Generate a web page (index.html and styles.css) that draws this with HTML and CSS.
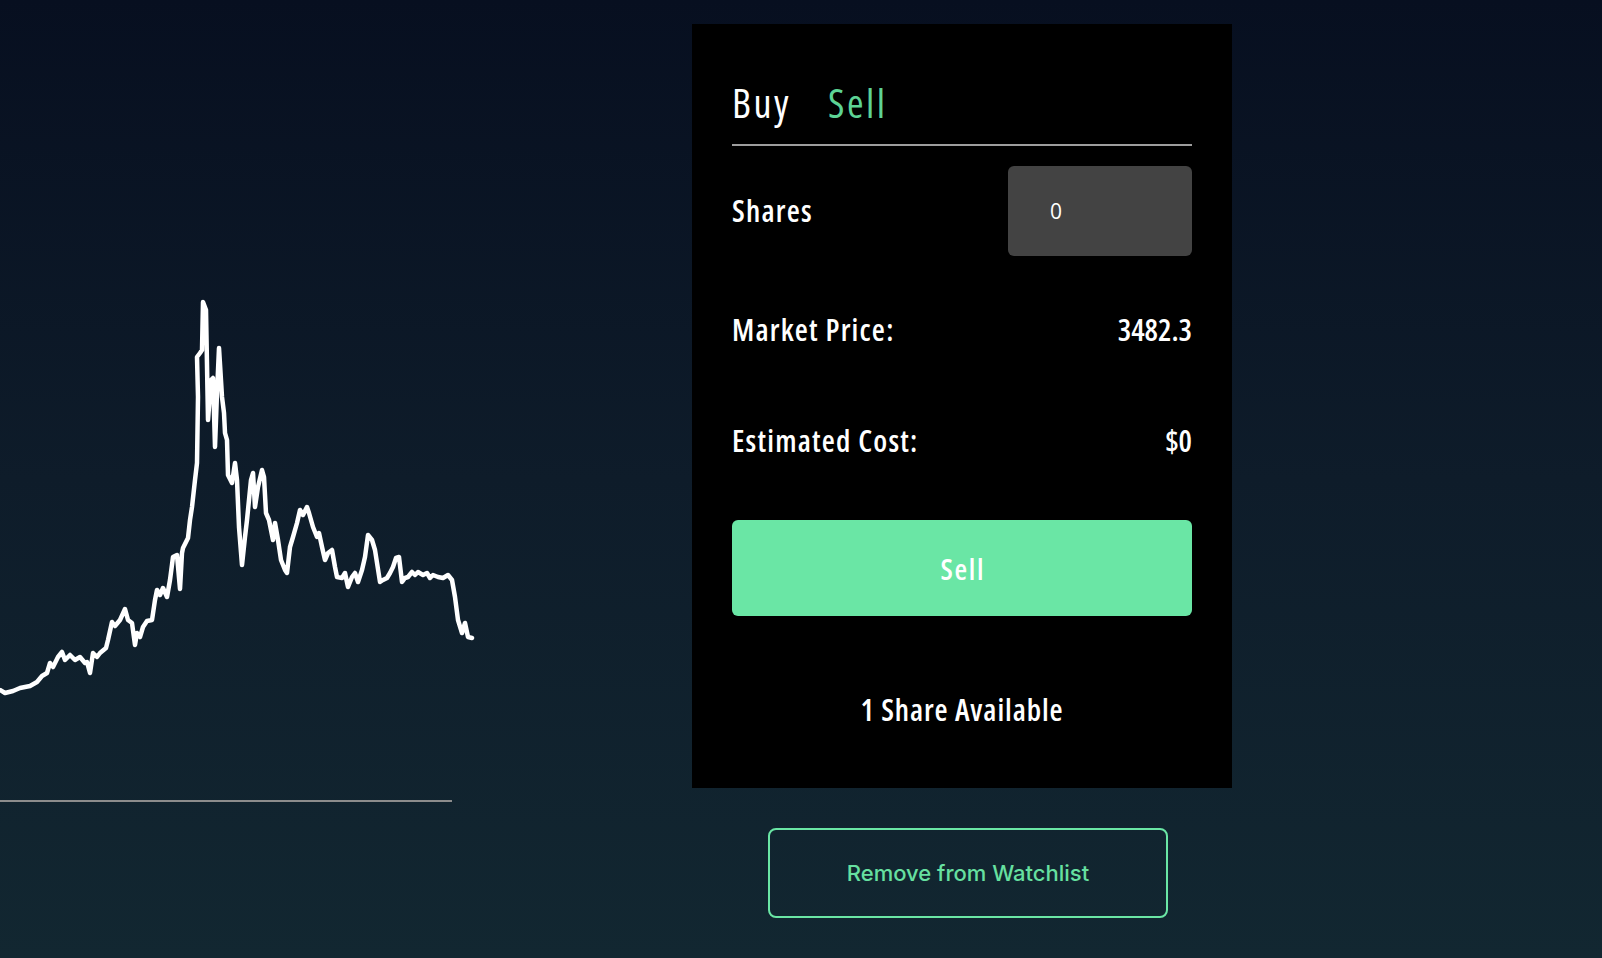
FILE: index.html
```html
<!DOCTYPE html>
<html lang="en">
<head>
<meta charset="utf-8">
<title>Trade</title>
<link rel="stylesheet" href="styles.css">
</head>
<body>
<div class="page">
  <section class="chart-col">
    <svg class="chart" width="480" height="530" viewBox="0 280 480 530">
      <polyline class="price-line" points="0,690 5,693 13,691 20,688 30,686 37,682 42,676 47,673 50,663 53,667 58,657 62,652 65,660 70,655 75,660 80,657 85,663 87,662 90,673 93,653 97,657 100,653 106,648 108,640 112,622 115,626 120,620 125,609 128,620 132,623 135,645 137,633 140,637 143,627 147,621 152,620 155,600 157,590 160,595 163,588 167,597 170,580 173,557 177,555 180,589 182,553 183,548 186,542 188,538 190,520 192,507 195,480 197,463 198,397 197,357 200,353 202,350 203,302 206,310 208,420 211,380 213,378 215,447 217,393 219,348 222,397 224,413 225,433 227,440 228,475 232,483 235,463 237,480 239,527 242,565 245,537 247,520 251,480 253,473 255,507 258,487 262,470 264,477 266,513 269,520 273,540 275,523 278,540 281,560 285,570 287,573 290,547 293,537 297,523 300,510 303,515 307,507 309,513 313,527 317,537 319,533 322,547 325,560 328,553 332,550 335,567 337,577 342,578 345,573 348,587 352,577 355,573 358,582 362,570 365,557 368,535 372,540 375,550 380,582 383,580 387,578 390,573 393,567 396,558 399,557 402,582 405,578 408,577 412,572 415,575 418,572 423,575 427,573 430,578 433,575 438,577 443,578 448,575 452,580 455,597 458,620 462,633 465,623 468,637 472,638"/>
      <line class="axis" x1="0" y1="801" x2="452" y2="801"/>
    </svg>
  </section>

  <section class="trade-col">
    <div class="trade-card">
      <div class="tabs">
        <span class="tab">Buy</span>
        <span class="tab tab-active">Sell</span>
      </div>
      <div class="row row-shares">
        <label class="label" for="shares">Shares</label>
        <input class="shares-input" id="shares" type="text" value="0">
      </div>
      <div class="row row-price">
        <span class="label">Market Price:</span>
        <span class="value">3482.3</span>
      </div>
      <div class="row row-cost">
        <span class="label">Estimated Cost:</span>
        <span class="value">$0</span>
      </div>
      <button class="submit-btn" type="button">Sell</button>
      <div class="available">1 Share Available</div>
    </div>
    <button class="watch-btn" type="button">Remove from Watchlist</button>
  </section>
</div>
</body>
</html>
```

FILE: styles.css
```css
* {
  box-sizing: border-box;
}

html, body {
  margin: 0;
  padding: 0;
}

body {
  width: 1602px;
  height: 958px;
  overflow: hidden;
  background: linear-gradient(to bottom, #070f20 0%, #0e1c2a 50%, #122731 100%);
  font-family: "Open Sans", "DejaVu Sans Condensed", sans-serif;
  font-stretch: condensed;
  color: #ffffff;
}

.page {
  display: flex;
  align-items: flex-start;
  height: 958px;
}

.chart-col {
  flex: 0 0 480px;
  padding-top: 280px;
}

.chart {
  display: block;
}

.price-line {
  fill: none;
  stroke: #ffffff;
  stroke-width: 4.5;
  stroke-linejoin: round;
  stroke-linecap: round;
}

.axis {
  stroke: #8c8c8c;
  stroke-width: 2;
}

.trade-col {
  margin-left: 212px;
  padding-top: 24px;
  display: flex;
  flex-direction: column;
  align-items: flex-start;
}

.trade-card {
  width: 540px;
  background: #000000;
  padding: 56px 40px 61px;
  display: flex;
  flex-direction: column;
}

.tabs {
  display: flex;
  gap: 37px;
  height: 46px;
  line-height: 46px;
  font-size: 40px;
  font-weight: 500;
  letter-spacing: 2.5px;
  margin-bottom: 18px;
}

.tab {
  color: #ffffff;
}

.tab-active {
  color: #5dd395;
}

.row {
  display: flex;
  align-items: center;
  justify-content: space-between;
  font-size: 30px;
  font-weight: 600;
  line-height: 34px;
  height: 34px;
}

.row-shares {
  border-top: 2px solid #9d9d9d;
  padding-top: 20px;
  height: auto;
}

.row-price {
  margin-top: 57px;
}

.row-cost {
  margin-top: 77px;
}

.label {
  color: #ffffff;
  letter-spacing: 1.2px;
}

.value {
  color: #ffffff;
}

.shares-input {
  width: 184px;
  height: 90px;
  border: none;
  border-radius: 6px;
  background: #434343;
  color: #ffffff;
  font-family: inherit;
  font-stretch: normal;
  font-size: 21px;
  font-weight: 500;
  padding: 0 0 0 42px;
  outline: none;
}

.submit-btn {
  margin-top: 62px;
  height: 96px;
  width: 100%;
  border: none;
  border-radius: 6px;
  background: #6ae6a5;
  color: #ffffff;
  font-family: inherit;
  font-stretch: condensed;
  font-size: 29px;
  font-weight: 600;
  letter-spacing: 1.7px;
  text-indent: 1.7px;
}

.available {
  margin-top: 77px;
  text-align: center;
  font-size: 30px;
  font-weight: 600;
  line-height: 34px;
  letter-spacing: 0.9px;
}

.watch-btn {
  margin-top: 40px;
  margin-left: 76px;
  width: 400px;
  height: 90px;
  background: transparent;
  border: 2px solid #6ae6a5;
  border-radius: 8px;
  color: #66e0a0;
  font-family: "Inter", "Liberation Sans", sans-serif;
  font-stretch: normal;
  font-size: 22px;
  font-weight: 500;
}
```
